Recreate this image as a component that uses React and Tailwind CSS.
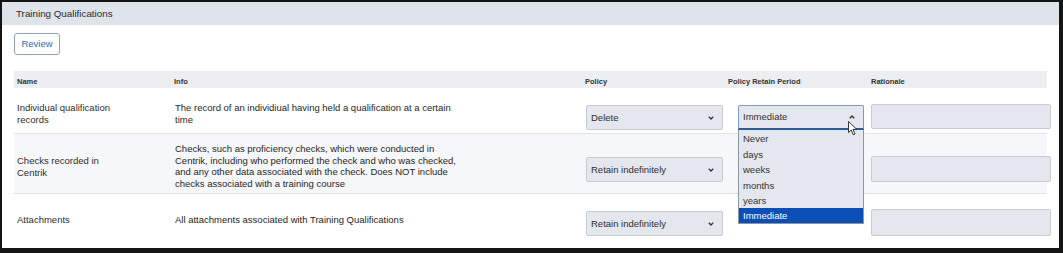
import { useState } from 'react'

// per-row offsets: text top padding, control top margin, rationale top margin
const ROWS = [
  {
    name: ['Individual qualification', 'records'],
    info: ['The record of an individiual having held a qualification at a certain', 'time'],
    policy: 'Delete',
    period: 'Immediate',
    h: 'h-[46px]',
    bg: 'bg-white',
    namePt: 'pt-[14px]',
    infoPt: 'pt-[14px]',
    ctlMt: 'mt-[17px]',
    ratMt: 'mt-[16px] h-[25px]',
  },
  {
    name: ['Checks recorded in', 'Centrik'],
    info: [
      'Checks, such as proficiency checks, which were conducted in',
      'Centrik, including who performed the check and who was checked,',
      'and any other data associated with the check. Does NOT include',
      'checks associated with a training course',
    ],
    policy: 'Retain indefinitely',
    h: 'h-[60px]',
    bg: 'bg-[#f6f7f9]',
    namePt: 'pt-[21px]',
    infoPt: 'pt-[9px]',
    ctlMt: 'mt-[23px]',
    ratMt: 'mt-[22px] h-[26px]',
  },
  {
    name: ['Attachments'],
    info: ['All attachments associated with Training Qualifications'],
    policy: 'Retain indefinitely',
    h: 'h-[53px]',
    bg: 'bg-white',
    namePt: 'pt-[20px]',
    infoPt: 'pt-[20px]',
    ctlMt: 'mt-[17px]',
    ratMt: 'mt-[15px] h-[27px]',
  },
]

const OPTIONS = ['Never', 'days', 'weeks', 'months', 'years', 'Immediate']

function ChevronDown() {
  return (
    <svg width="6" height="4" viewBox="0 0 6 4" className="shrink-0">
      <path d="M0.8 0.8 L3 3 L5.2 0.8" fill="none" stroke="#333" strokeWidth="1.3" />
    </svg>
  )
}

function ChevronUp() {
  return (
    <svg width="6" height="4" viewBox="0 0 6 4" className="shrink-0">
      <path d="M0.8 3.2 L3 1 L5.2 3.2" fill="none" stroke="#333" strokeWidth="1.3" />
    </svg>
  )
}

function Cursor() {
  return (
    <svg width="11" height="15" viewBox="0 0 11 15" className="absolute left-[110px] top-[16px] z-20">
      <path d="M0.5 0.5 L0.5 11.5 L3.2 9 L5.2 13.8 L7 13 L5 8.4 L8.8 8.4 Z" fill="#fff" stroke="#222" strokeWidth="0.9" strokeLinejoin="round" />
    </svg>
  )
}

function PeriodSelect({ value, className }) {
  const [open] = useState(true)
  return (
    <div className={`relative w-[126px] ${className}`}>
      <div className="flex h-[25px] items-center justify-between rounded-t-[2px] border border-[#7f9cc2] border-b-[2px] border-b-[#2d5b93] bg-[#e4e7ee] pl-[4px] pr-[8px] text-[9.5px] text-[#333]">
        <span>{value}</span>
        <ChevronUp />
      </div>
      <Cursor />
      {open && (
        <div className="absolute left-0 top-full z-10 w-full border border-t-0 border-[#8d95a1] bg-[#e4e7ee] pt-[1px]">
          {OPTIONS.map((o) => (
            <div
              key={o}
              className={`flex h-[15.4px] items-center pl-[4px] pt-[1px] text-[9.5px] ${
                o === 'Immediate' ? 'bg-[#0b4fb6] text-white' : 'text-[#333]'
              }`}
            >
              {o}
            </div>
          ))}
        </div>
      )}
    </div>
  )
}

export default function App() {
  return (
    <div
      className="h-[253px] w-[1063px] border-b-[5px] border-l-2 border-r-[4px] border-t-2 border-[#141414] bg-white text-[#333]"
      style={{ fontFamily: '"Liberation Sans", Arial, sans-serif' }}
    >
      <div className="flex h-[23px] items-center bg-[#dfe3ea] px-[14px] pt-[2px] text-[9.8px] font-medium text-[#2b2b2b]">
        Training Qualifications
      </div>

      <div className="px-[12px]">
        <button className="mt-[8px] flex h-[22px] w-[46px] items-center justify-center rounded-[3px] border border-[#8fa3bd] bg-white pt-[1px] text-[9.5px] text-[#2d6db5]">
          Review
        </button>

        <div className="mt-[16px] grid h-[17px] grid-cols-[157px_411px_143px_143px_1fr] items-center bg-[#eceef1] pt-[4px] text-[7.5px] font-bold text-[#333]">
          <div className="pl-[3px]">Name</div>
          <div className="pl-[3px]">Info</div>
          <div className="pl-[3px]">Policy</div>
          <div className="pl-[3px]">Policy Retain Period</div>
          <div className="pl-[3px]">Rationale</div>
        </div>

        {ROWS.map((r, i) => (
          <div
            key={i}
            className={`grid ${r.h} ${r.bg} grid-cols-[157px_411px_143px_143px_1fr] items-start ${
              i < ROWS.length - 1 ? 'border-b border-[#e1e3e7]' : ''
            } text-[9.5px] leading-[11.7px] text-[#2e2e2e]`}
          >
            <div className={`pl-[3px] ${r.namePt}`}>
              {r.name.map((l) => (
                <div key={l}>{l}</div>
              ))}
            </div>
            <div className={`pl-[4px] text-[#262626] ${r.infoPt}`}>
              {r.info.map((l) => (
                <div key={l}>{l}</div>
              ))}
            </div>
            <div className="pl-[4px]">
              <div className={`flex h-[25px] w-[137px] items-center justify-between rounded-[2px] border border-[#c6cad1] bg-[#e4e7ee] pl-[4px] pr-[8px] ${r.ctlMt}`}>
                <span>{r.policy}</span>
                <ChevronDown />
              </div>
            </div>
            <div className="pl-[13px]">
              {r.period ? <PeriodSelect value={r.period} className={r.ctlMt} /> : null}
            </div>
            <div className="pl-[3px]">
              <div className={`w-[180px] rounded-[2px] border border-[#c8ccd2] bg-[#e4e7ee] ${r.ratMt}`} />
            </div>
          </div>
        ))}
      </div>
    </div>
  )
}
